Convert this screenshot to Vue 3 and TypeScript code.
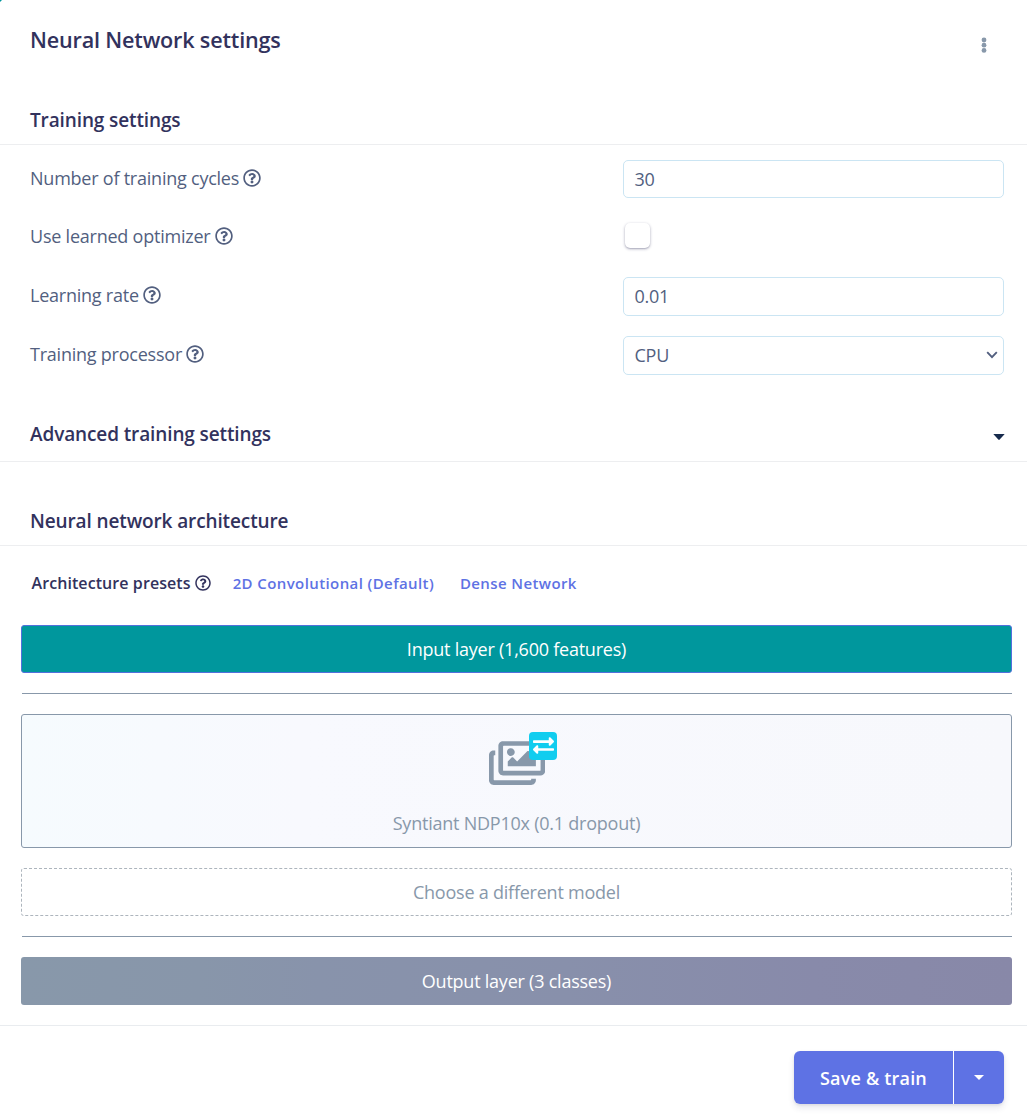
<script setup lang="ts">
import { ref } from 'vue'

interface SettingRow {
  label: string
  kind: 'text' | 'checkbox' | 'select'
  value: string
}

const rows: SettingRow[] = [
  { label: 'Number of training cycles', kind: 'text', value: '30' },
  { label: 'Use learned optimizer', kind: 'checkbox', value: '' },
  { label: 'Learning rate', kind: 'text', value: '0.01' },
  { label: 'Training processor', kind: 'select', value: 'CPU' },
]
const presets = ref<string[]>(['2D Convolutional (Default)', 'Dense Network'])

const questionPath =
  'M256 8C119.043 8 8 119.083 8 256c0 136.997 111.043 248 248 248s248-111.003 248-248C504 119.083 392.957 8 256 8zm0 448c-110.532 0-200-89.431-200-200 0-110.495 89.472-200 200-200 110.491 0 200 89.471 200 200 0 110.53-89.431 200-200 200zm107.244-255.2c0 67.052-72.421 68.084-72.421 92.863V300c0 6.627-5.373 12-12 12h-45.647c-6.627 0-12-5.373-12-12v-8.659c0-35.745 27.1-50.034 47.579-61.516 17.561-9.845 28.324-16.541 28.324-29.579 0-17.246-21.999-28.693-39.784-28.693-23.189 0-33.894 10.977-48.942 29.969-4.057 5.12-11.46 6.071-16.666 2.124l-27.824-21.098c-5.107-3.872-6.251-11.066-2.644-16.363C184.846 131.491 214.94 112 261.794 112c49.071 0 101.45 38.304 101.45 88.8zM298 368c0 23.159-18.841 42-42 42s-42-18.841-42-42 18.841-42 42-42 42 18.841 42 42z'
const imagesPath =
  'M480 416v16c0 26.51-21.49 48-48 48H48c-26.51 0-48-21.49-48-48V176c0-26.51 21.49-48 48-48h16v48H54a6 6 0 0 0-6 6v244a6 6 0 0 0 6 6h372a6 6 0 0 0 6-6v-10h48zm42-336H150a6 6 0 0 0-6 6v244a6 6 0 0 0 6 6h372a6 6 0 0 0 6-6V86a6 6 0 0 0-6-6zm6-48c26.51 0 48 21.49 48 48v256c0 26.51-21.49 48-48 48H144c-26.51 0-48-21.49-48-48V80c0-26.51 21.49-48 48-48h384zM264 144c0 22.091-17.909 40-40 40s-40-17.909-40-40 17.909-40 40-40 40 17.909 40 40zm-72 96l39.515-39.515c4.686-4.686 12.284-4.686 16.971 0L288 240l103.515-103.515c4.686-4.686 12.284-4.686 16.971 0L480 208v80H192v-48z'
const exchangePath =
  'M0 168v-16c0-13.255 10.745-24 24-24h360V80c0-21.367 25.899-32.042 40.971-16.971l80 80c9.372 9.373 9.372 24.569 0 33.941l-80 80C409.956 271.982 384 261.456 384 240v-48H24c-13.255 0-24-10.745-24-24zm488 152H128v-48c0-21.314-25.862-32.08-40.971-16.971l-80 80c-9.372 9.373-9.372 24.569 0 33.941l80 80C102.057 463.997 128 453.437 128 432v-48h360c13.255 0 24-10.745 24-24v-16c0-13.255-10.745-24-24-24z'
</script>

<template>
  <main class="panel">
    <span class="corner"></span>
    <header class="panel-header">
      <h2>Neural Network settings</h2>
      <svg class="dots" viewBox="0 0 6 16" width="6" height="16">
        <circle cx="3" cy="3" r="2.4" /><circle cx="3" cy="8.2" r="2.4" /><circle cx="3" cy="13.4" r="2.4" />
      </svg>
    </header>

    <h3 class="section training"><span>Training settings</span></h3>
    <div class="rows">
      <div v-for="row in rows" :key="row.label" class="row" :class="row.kind">
        <label><span>{{ row.label }}</span>
          <svg class="help" viewBox="0 0 512 512"><path :d="questionPath" /></svg>
        </label>
        <div v-if="row.kind === 'checkbox'" class="check"></div>
        <div v-else class="field">
          <span>{{ row.value }}</span>
          <svg v-if="row.kind === 'select'" viewBox="0 0 12 8" width="12" height="8">
            <path d="M1.2 1.2 L6 6.1 L10.8 1.2" fill="none" stroke="#525f7f" stroke-width="1.9" />
          </svg>
        </div>
      </div>
    </div>

    <h3 class="section advanced">
      <span>Advanced training settings</span>
      <svg viewBox="0 0 12 6" width="12" height="6"><path d="M0.3 0H11.7L6.7 5.6Q6 6.2 5.3 5.6Z" fill="#172b4d" /></svg>
    </h3>
    <h3 class="section arch"><span>Neural network architecture</span></h3>

    <div class="presets">
      <span class="preset-label">Architecture presets</span>
      <svg class="help" viewBox="0 0 512 512"><path :d="questionPath" /></svg>
      <a v-for="p in presets" :key="p">{{ p }}</a>
    </div>

    <div class="layers">
      <div class="layer input"><span>Input layer (1,600 features)</span></div>
      <hr />
      <div class="model">
        <div class="model-icon">
          <svg viewBox="0 0 576 512" width="56.25" height="50"><path :d="imagesPath" /></svg>
          <div class="badge">
            <svg viewBox="0 0 512 512" width="21" height="21"><path :d="exchangePath" /></svg>
          </div>
        </div>
        <span>Syntiant NDP10x (0.1 dropout)</span>
      </div>
      <div class="layer choose"><span>Choose a different model</span></div>
      <hr />
      <div class="layer output"><span>Output layer (3 classes)</span></div>
    </div>

    <footer>
      <div class="actions">
        <button class="save">Save &amp; train</button>
        <button class="more">
          <svg viewBox="0 0 10 5" width="10" height="5"><path d="M0 0H10L5 5Z" fill="#fff" /></svg>
        </button>
      </div>
    </footer>
  </main>
</template>

<style>
body {
  background: #fff;
}
</style>

<style scoped>
* {
  box-sizing: border-box;
}
.panel {
  position: relative;
  width: 1027px;
  height: 1120px;
  overflow: hidden;
  font-family: 'Open Sans', 'Noto Sans', sans-serif;
  font-size: 18px;
  letter-spacing: -0.23px;
  color: #525f7f;
  white-space: nowrap;
  display: flex;
  flex-direction: column;
}
.corner {
  position: absolute;
  left: 0;
  top: 0;
  width: 2px;
  height: 2px;
  background: #00979d;
  clip-path: polygon(0 0, 100% 0, 0 100%);
}
svg {
  display: block;
  flex: none;
}
h2,
h3 {
  margin: 0;
  font-weight: 600;
  color: #32325d;
}
.panel-header {
  height: 90px;
  padding: 25px 40px 0 30px;
  display: flex;
  justify-content: space-between;
}
h2 {
  font-size: 21.6px;
  letter-spacing: -0.18px;
  line-height: 30px;
}
.dots {
  margin-top: 12px;
  fill: #8898aa;
}
.section {
  display: flex;
  justify-content: space-between;
  border-bottom: 1px solid #edeef0;
  padding: 0 23px 0 30px;
  font-size: 19px;
  letter-spacing: -0.12px;
  line-height: 26px;
}
.training {
  height: 55px;
  padding-top: 17px;
}
.rows {
  padding: 15px 23px 0 30px;
  height: 276px;
}
.row {
  display: flex;
  justify-content: space-between;
  height: 59px;
}
.row.text {
  height: 58px;
}
.row.text:nth-child(3) {
  height: 59px;
}
.row label {
  display: flex;
  height: 36px;
  align-items: center;
  gap: 4.3px;
}
.help {
  width: 18px;
  height: 18px;
  fill: currentColor;
}
.field {
  width: 381px;
  height: 39px;
  border: 1px solid #cbe5f3;
  border-radius: 5px;
  padding: 0 5.5px 1px 10.5px;
  display: flex;
  align-items: center;
  justify-content: space-between;
}
.row:first-child .field {
  height: 38px;
  padding-bottom: 0;
}
.check {
  width: 25px;
  height: 25px;
  margin: 5px 354px 0 0;
  border-radius: 5px;
  box-shadow: 0 1px 3px rgba(50, 50, 93, 0.4), 0 1px 1px rgba(50, 50, 93, 0.1);
}
.advanced {
  height: 41px;
}
.advanced svg {
  margin: 13px -0.5px 0 0;
}
.arch {
  height: 84px;
  padding-top: 46px;
}
.presets {
  height: 79px;
  padding: 25px 0 0 31.5px;
  display: flex;
  align-items: flex-start;
  color: #32325d;
  font-size: 16px;
  font-weight: 600;
  letter-spacing: 0.08px;
  line-height: 24px;
}
.presets .help {
  width: 16px;
  height: 16px;
  margin: 4px 21.5px 0 4.5px;
}
.presets a {
  color: #5e72e4;
  font-size: 15px;
  letter-spacing: 0.4px;
  margin-right: 25.8px;
}
.layers {
  width: 991px;
  margin-left: 21px;
  height: 400px;
  display: flex;
  flex-direction: column;
}
.layer {
  height: 48px;
  border-radius: 3px;
  display: flex;
  align-items: center;
  justify-content: center;
}
.input {
  background: #00979d;
  color: #fff;
  border: 1px solid #5270dc;
}
hr {
  width: 990px;
  height: 1px;
  border: 0;
  margin: 20px 0 20px 1px;
  background: #8898aa;
}
.model {
  height: 134px;
  margin-bottom: 20px;
  border: 1px solid #8898aa;
  border-radius: 3px;
  background: linear-gradient(90deg, #f6fbfe, #f7fafe 14%, #f8f9fe 28%, #f7f8fc);
  color: #8898aa;
  display: flex;
  flex-direction: column;
  align-items: center;
  padding-top: 23px;
}
.model-icon {
  position: relative;
  left: 0.7px;
  height: 72px;
  fill: #8898aa;
}
.model > span {
  line-height: 26px;
}
.badge {
  position: absolute;
  left: 40px;
  top: -6px;
  width: 28px;
  height: 28px;
  border-radius: 4px;
  background: #11cdef;
  fill: #fff;
  display: flex;
  align-items: center;
  justify-content: center;
}
.badge svg {
  margin-top: -1px;
}
.choose {
  border: 1px dashed #adb5bd;
  color: #8898aa;
}
.output {
  background: linear-gradient(90deg, #8898aa, #8896aa 18%, #8893ab 30%, #8890ab 55%, #888aaa 80%, #8888a8);
  color: #fff;
}
footer {
  margin-top: auto;
  height: 95px;
  border-top: 1px solid #e9ecef;
  padding: 25px 23px 0;
  display: flex;
  justify-content: flex-end;
  align-items: flex-start;
}
.actions {
  display: flex;
  width: 210px;
  height: 53px;
  border-radius: 6px;
  box-shadow: 0 4px 6px rgba(50, 50, 93, 0.11), 0 1px 3px rgba(0, 0, 0, 0.08);
}
button {
  border: 0;
  padding: 0;
  background: #5e72e4;
  color: #fff;
  font: 600 18px 'Open Sans', sans-serif;
  letter-spacing: 0.18px;
  display: flex;
  align-items: center;
  justify-content: center;
}
.save {
  width: 159px;
  border-radius: 6px 0 0 6px;
}
.more {
  flex: 1;
  margin-left: 1px;
  border-radius: 0 6px 6px 0;
}
</style>
